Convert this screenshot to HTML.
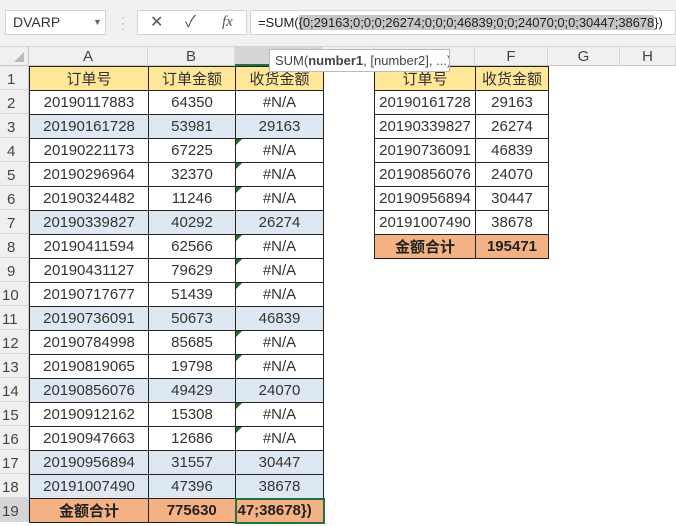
<!DOCTYPE html>
<html><head><meta charset="utf-8"><style>
*{margin:0;padding:0;box-sizing:border-box}
body{width:676px;height:523px;overflow:hidden;background:#fff;font-family:"Liberation Sans","Noto Sans CJK SC",sans-serif;position:relative;color:#333}
.a{position:absolute}
.top{left:0;top:0;width:676px;height:47px;background:#f1f1f1;border-bottom:1px solid #d6d6d6}
.box{background:#fff;border:1px solid #d4d4d4}
.ch{top:47px;height:19px;background:#f0f0f0;border-right:1px solid #d6d6d6;border-bottom:1px solid #c8c8c8;text-align:center;font-size:15px;line-height:19px;color:#444}
.rh{left:0;width:29px;height:24px;background:#f0f0f0;border-bottom:1px solid #d6d6d6;border-right:1px solid #c8c8c8;font-size:15px;line-height:28px;padding-left:7px;color:#444}
table{border-collapse:collapse;table-layout:fixed;position:absolute}
td{border:1px solid #222;height:24px;text-align:center;font-size:15px;padding:0;white-space:nowrap;overflow:hidden;color:#333}
.h td{background:#ffe699}
.b td{background:#dde8f3}
.t td{background:#f4b183;font-weight:bold;color:#222}
.tri{position:absolute;width:0;height:0;border-top:6px solid #1e6b30;border-right:6px solid transparent}
</style></head><body>
<div class="a top"></div>
<div class="a box" style="left:5px;top:10px;width:101px;height:25px;font-size:14px;line-height:23px;padding-left:7px;color:#333">DVARP<span style="position:absolute;left:87px;top:0;font-size:9px;color:#666">▼</span></div>
<div class="a" style="left:121px;top:14px;color:#aaa;font-size:12px;line-height:6px">·<br>·<br>·</div>
<div class="a box" style="left:137px;top:10px;width:110px;height:25px;font-size:16px;line-height:23px;color:#555"><span class="a" style="left:12px">✕</span><span class="a" style="left:47px">✓</span><span class="a" style="left:84px;font-family:'Liberation Serif',serif;font-style:italic;font-size:15px">fx</span></div>
<div class="a box" style="left:250px;top:10px;width:426px;height:25px;font-size:13px;letter-spacing:-0.05px;line-height:23px;padding-left:7px;color:#222;white-space:nowrap;overflow:hidden">=SUM(<span style="background:#c6c6c6">{0;29163;0;0;0;26274;0;0;0;46839;0;0;24070;0;0;30447;38678</span>})</div>

<div class="a" style="left:0;top:47px;width:29px;height:19px;background:#f0f0f0;border-right:1px solid #c8c8c8;border-bottom:1px solid #c8c8c8"><div class="a" style="right:4px;bottom:3px;width:0;height:0;border-bottom:10px solid #bbb;border-left:10px solid transparent"></div></div>
<div class="a ch" style="left:29px;width:119px">A</div>
<div class="a ch" style="left:148px;width:87px">B</div>
<div class="a ch" style="left:235px;width:87px;background:#d6d6d6;border-bottom:2px solid #217346">C</div>
<div class="a ch" style="left:322px;width:52px">D</div>
<div class="a ch" style="left:374px;width:101px">E</div>
<div class="a ch" style="left:475px;width:73px">F</div>
<div class="a ch" style="left:548px;width:72px">G</div>
<div class="a ch" style="left:620px;width:56px">H</div>

<div class="a rh" style="top:66px">1</div><div class="a rh" style="top:90px">2</div><div class="a rh" style="top:114px">3</div><div class="a rh" style="top:138px">4</div><div class="a rh" style="top:162px">5</div><div class="a rh" style="top:186px">6</div><div class="a rh" style="top:210px">7</div><div class="a rh" style="top:234px">8</div><div class="a rh" style="top:258px">9</div><div class="a rh" style="top:282px;padding-left:2px">10</div><div class="a rh" style="top:306px;padding-left:2px">11</div><div class="a rh" style="top:330px;padding-left:2px">12</div><div class="a rh" style="top:354px;padding-left:2px">13</div><div class="a rh" style="top:378px;padding-left:2px">14</div><div class="a rh" style="top:402px;padding-left:2px">15</div><div class="a rh" style="top:426px;padding-left:2px">16</div><div class="a rh" style="top:450px;padding-left:2px">17</div><div class="a rh" style="top:474px;padding-left:2px">18</div><div class="a rh" style="top:498px;padding-left:2px;background:#d6d6d6">19</div>

<table style="left:29px;top:66px;width:294px">
<col style="width:119px"><col style="width:87px"><col style="width:88px">
<tr class="h"><td>订单号</td><td>订单金额</td><td>收货金额</td></tr>
<tr><td>20190117883</td><td>64350</td><td>#N/A</td></tr>
<tr class="b"><td>20190161728</td><td>53981</td><td>29163</td></tr>
<tr><td>20190221173</td><td>67225</td><td>#N/A</td></tr>
<tr><td>20190296964</td><td>32370</td><td>#N/A</td></tr>
<tr><td>20190324482</td><td>11246</td><td>#N/A</td></tr>
<tr class="b"><td>20190339827</td><td>40292</td><td>26274</td></tr>
<tr><td>20190411594</td><td>62566</td><td>#N/A</td></tr>
<tr><td>20190431127</td><td>79629</td><td>#N/A</td></tr>
<tr><td>20190717677</td><td>51439</td><td>#N/A</td></tr>
<tr class="b"><td>20190736091</td><td>50673</td><td>46839</td></tr>
<tr><td>20190784998</td><td>85685</td><td>#N/A</td></tr>
<tr><td>20190819065</td><td>19798</td><td>#N/A</td></tr>
<tr class="b"><td>20190856076</td><td>49429</td><td>24070</td></tr>
<tr><td>20190912162</td><td>15308</td><td>#N/A</td></tr>
<tr><td>20190947663</td><td>12686</td><td>#N/A</td></tr>
<tr class="b"><td>20190956894</td><td>31557</td><td>30447</td></tr>
<tr class="b"><td>20191007490</td><td>47396</td><td>38678</td></tr>
<tr class="t"><td>金额合计</td><td>775630</td><td style="text-align:left;border:2px solid #217346;padding-left:1px">47;38678})</td></tr>
</table>
<div class="tri" style="left:236px;top:139px"></div><div class="tri" style="left:236px;top:163px"></div><div class="tri" style="left:236px;top:187px"></div><div class="tri" style="left:236px;top:235px"></div><div class="tri" style="left:236px;top:259px"></div><div class="tri" style="left:236px;top:283px"></div><div class="tri" style="left:236px;top:331px"></div><div class="tri" style="left:236px;top:355px"></div><div class="tri" style="left:236px;top:403px"></div><div class="tri" style="left:236px;top:427px"></div>

<table style="left:374px;top:66px;width:174px">
<col style="width:101px"><col style="width:73px">
<tr class="h"><td>订单号</td><td>收货金额</td></tr>
<tr><td>20190161728</td><td>29163</td></tr>
<tr><td>20190339827</td><td>26274</td></tr>
<tr><td>20190736091</td><td>46839</td></tr>
<tr><td>20190856076</td><td>24070</td></tr>
<tr><td>20190956894</td><td>30447</td></tr>
<tr><td>20191007490</td><td>38678</td></tr>
<tr class="t"><td>金额合计</td><td>195471</td></tr>
</table>

<div class="a" style="left:269px;top:49px;width:181px;height:23px;background:#fff;border:1px solid #bbb;font-size:13px;line-height:21px;padding-left:5px;color:#444;white-space:nowrap;overflow:hidden">SUM(<b>number1</b>, [number2], ...)</div>
</body></html>
